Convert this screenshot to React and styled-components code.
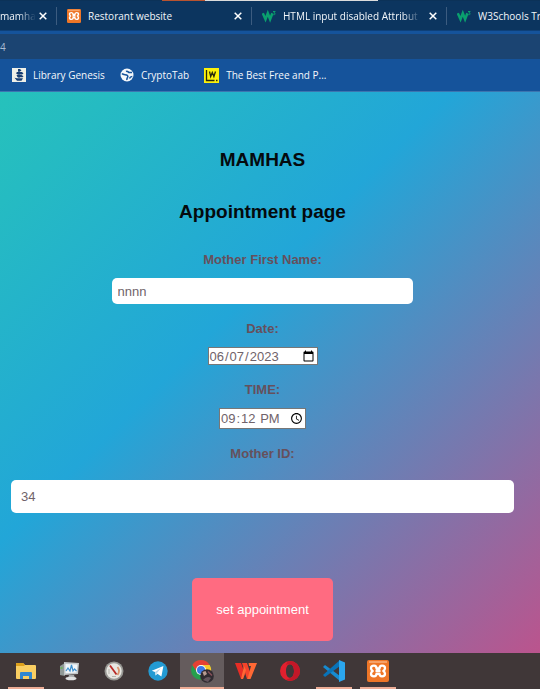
import React from "react";
import styled, { createGlobalStyle } from "styled-components";

const Global = createGlobalStyle`
  * { box-sizing: border-box; }
  html, body, #root { height: 100%; margin: 0; }
  body { font-family: "Liberation Sans", Arial, sans-serif; }
`;

const Screen = styled.div`
  min-height: 100%;
  display: flex;
  flex-direction: column;
  overflow: hidden;
`;

const WindowEdge = styled.div`
  height: 1px;
  background: linear-gradient(90deg, #0c3258 30%, #b9532f 30%, #b9532f 38%, #dcdcdc 38%, #dcdcdc 70%, #0c3258 70%);
`;

const TabStrip = styled.nav`
  height: 30px;
  display: flex;
  align-items: center;
  overflow: hidden;
  background: #0c355f;
  border-bottom: 1px solid #0e4078;
  color: #f2f6fa;
  font: 10px/16px "Open Sans", "Noto Sans", sans-serif;
`;

const Tab = styled.div`
  flex: none;
  width: ${(p) => p.$width}px;
  height: 18px;
  display: flex;
  align-items: center;
  gap: ${(p) => (p.$cut ? 2 : 7)}px;
  padding: 0 8px 0 ${(p) => (p.$cut ? 0 : 10)}px;
  border-right: 1px solid #3c5c80;
`;

const TabTitle = styled.span`
  flex: 1;
  min-width: 0;
  overflow: hidden;
  white-space: nowrap;
  mask-image: ${(p) => (p.$fade ? "linear-gradient(90deg, #000 calc(100% - 18px), transparent)" : "none")};
`;

const CloseButton = styled.button`
  flex: none;
  width: 10px;
  height: 16px;
  padding: 0;
  border: 0;
  background: none;
  color: #fff;
  display: grid;
  place-items: center;
`;

const AddressRow = styled.div`
  height: 28px;
  padding: 3px 0 0;
  background: #15539b;
`;

const Address = styled.input`
  display: block;
  width: 100%;
  height: 25px;
  padding: 0;
  border: 0;
  outline: 0;
  background: #1b4472;
  color: #a9bdd2;
  font: 10px "Open Sans", "Noto Sans", sans-serif;
`;

const Bookmarks = styled.nav`
  height: 33px;
  display: flex;
  align-items: center;
  gap: 15px;
  padding: 0 12px;
  background: #15539b;
  border-bottom: 1px solid #3c75b0;
`;

const Bookmark = styled.a`
  display: flex;
  align-items: center;
  gap: 7px;
  color: #f5f8fc;
  white-space: nowrap;
  text-decoration: none;
  font: 10px/16px "Open Sans", "Noto Sans", sans-serif;
`;

const Page = styled.main`
  flex: 1;
  padding: 0 26px 12px 11px;
  background: linear-gradient(135deg, #26c2bb 0%, #22a6d8 41%, #bb548d 100%);
`;

const Form = styled.form`
  display: flex;
  flex-direction: column;
  align-items: center;
`;

const Title = styled.h1`
  margin: ${(p) => p.$top}px 0 0;
  color: #050a0d;
  font-size: 19px;
  line-height: 24px;
  font-weight: bold;
`;

const Label = styled.label`
  margin-top: ${(p) => p.$top}px;
  color: #66505c;
  font-size: 13px;
  line-height: 16px;
  font-weight: bold;
`;

const TextField = styled.input`
  width: ${(p) => (p.$wide ? "100%" : "60%")};
  height: ${(p) => (p.$wide ? 33 : 26)}px;
  margin-top: ${(p) => (p.$wide ? 18 : 10)}px;
  padding: 0 ${(p) => (p.$wide ? 10 : 6)}px;
  border: 0;
  border-radius: 5px;
  background: #fff;
  color: #70636a;
  font: 13px "Liberation Sans", Arial, sans-serif;
`;

const PickerField = styled.input`
  width: ${(p) => p.$width}px;
  height: ${(p) => p.$height}px;
  margin-top: 10px;
  padding: 0;
  border: 1px solid #777;
  background: #fff;
  color: #70636a;
  font: 13px "Liberation Sans", Arial, sans-serif;

  &::-webkit-datetime-edit {
    padding: 0;
  }

  &::-webkit-calendar-picker-indicator {
    width: 13px;
    height: 13px;
    margin: 0 2px 0 4px;
    padding: 0;
  }
`;

const SubmitButton = styled.button`
  margin-top: 65px;
  padding: 24px;
  border: 0;
  border-radius: 5px;
  background: #ff6b81;
  color: #fff;
  font: 13px/15px "Liberation Sans", Arial, sans-serif;
`;

const Taskbar = styled.footer`
  height: 36px;
  display: flex;
  padding-left: 4px;
  background: #403738;
`;

const TaskButton = styled.button`
  flex: none;
  width: 44px;
  height: 36px;
  padding: 0;
  border: 0;
  display: grid;
  place-items: center;
  background-color: ${(p) => (p.$active ? "#655c5d" : "transparent")};
  background-image: ${(p) => (p.$open ? "linear-gradient(#edac95, #edac95)" : "none")};
  background-repeat: no-repeat;
  background-position: center bottom;
  background-size: ${(p) => (p.$active ? "100%" : "36px")} 2px;
`;

const Close = () => (
  <svg width="8" height="8" viewBox="0 0 8 8" aria-hidden="true">
    <path d="M.7.7l6.6 6.6M7.3.7L.7 7.3" stroke="#fff" strokeWidth="1.5" />
  </svg>
);

const Xampp = ({ size }) => (
  <svg width={size} height={size} viewBox="0 0 22 22" aria-hidden="true">
    <rect width="22" height="22" rx="2" fill="#ee7627" />
    <path d="M2 2h18" stroke="#f9b17e" strokeWidth="1.5" />
    <path d="M9.500 8.500C9.500 6.500 8.500 5.700 7 5.700c-2 0-3 1-3 2.600 0 1.200.7 2 1.700 2.700C4.700 11.700 4 12.500 4 13.700c0 1.600 1 2.600 3 2.600 1.500 0 2.500-.8 2.500-2.500h3c0 1.700 1 2.500 2.500 2.500 2 0 3-1 3-2.600 0-1.200-.7-2-1.700-2.700 1-.7 1.700-1.500 1.700-2.700 0-1.600-1-2.600-3-2.600-1.500 0-2.500.8-2.500 2.800zM8.500 11h5" fill="none" stroke="#fff" strokeWidth="2.300" strokeLinejoin="round" />
  </svg>
);

const W3 = () => (
  <svg width="14" height="14" viewBox="0 0 14 14" aria-hidden="true">
    <path d="M.8 4.200l2.700 6 2.300-6 2.300 6 2.300-6" fill="none" stroke="#0aa06e" strokeWidth="2.500" />
    <path d="M11 2.500h2.200l-1.300 1.400c1.700 0 1.700 2.200-.6 1.900" fill="none" stroke="#0aa06e" strokeWidth="1" />
  </svg>
);

const Genesis = () => (
  <svg width="14" height="14" viewBox="0 0 14 14" aria-hidden="true">
    <rect width="14" height="14" fill="#eef0e8" />
    <path d="M6 1h2l1.500 1.500L8 3.500H6zM5 4h5l1.500 1.500L10 6.500H5.500L4 5.300zM4.500 7h5l2 1.200-1 1H5.500zM2.500 9.800l2.500.4h6l-1.500 2.600H5z" fill="#173e73" />
    <path d="M7 1v9" stroke="#173e73" />
  </svg>
);

const Globe = () => (
  <svg width="14" height="14" viewBox="0 0 14 14" aria-hidden="true">
    <circle cx="7" cy="7" r="6.500" fill="#f5f8fb" />
    <path d="M2 5.500C3.500 7.500 6 6 7.500 7.500S6 10 7 12M12 4.500H9.500C8 4.500 8 2.500 6 3.500M9.500 10.500c.5-1.500 1.500-2 2.800-2" fill="none" stroke="#15539b" strokeWidth="1.600" />
  </svg>
);

const Lw = () => (
  <svg width="15" height="15" viewBox="0 0 15 15" aria-hidden="true">
    <rect width="15" height="15" fill="#fbf10b" />
    <path d="M2.500 2v10.500h8M5.500 3.500l1.200 5 1.600-4 1.600 4 1.600-5M12 12.500h1.500" fill="none" stroke="#29290c" strokeWidth="1.300" />
  </svg>
);

const Explorer = () => (
  <svg width="20" height="18" viewBox="0 0 20 18" aria-hidden="true">
    <path d="M0 2q0-1 1-1h6l2 2h10q1 0 1 1v12q0 1-1 1H1q-1 0-1-1z" fill="#f9ce62" />
    <path d="M0 2q0-1 1-1h6l2 2-1 1H0z" fill="#dda01b" />
    <path d="M4 17v-6q0-1 1-1h10q1 0 1 1v6h-3v-3H7v3z" fill="#2f86d0" />
  </svg>
);

const Monitor = () => (
  <svg width="22" height="20" viewBox="0 0 22 20" aria-hidden="true">
    <path d="M1 5l5-3v13l-5-1z" fill="#909a98" />
    <path d="M1.500 7h2" stroke="#60b94b" strokeWidth="1.500" />
    <path d="M5 1l15 1-1 11-14 1z" fill="#c3c8ca" />
    <path d="M6.500 3l12 .5-1 8-11 .8z" fill="#f0f6fa" />
    <path d="M7 10l2-3 2 3 1.500-6L14 10l1.500-2 2 2" fill="none" stroke="#3d90cf" strokeWidth="1.200" />
    <path d="M10 14h5l1 3H9z" fill="#a6aaab" />
    <ellipse cx="12" cy="17.500" rx="5.500" ry="1.800" fill="#dfe1e2" />
  </svg>
);

const Gauge = () => (
  <svg width="20" height="20" viewBox="0 0 20 20" aria-hidden="true">
    <circle cx="10" cy="10" r="9.500" fill="#989894" />
    <circle cx="10" cy="10" r="7.700" fill="#e8e7e2" />
    <path d="M13.500 6q3 4 0 8" fill="none" stroke="#d9966f" strokeWidth="1.800" />
    <path d="M6 4.500l6.500 9" stroke="#b92925" strokeWidth="1.800" />
    <path d="M5 8v5M8 15.500h4" stroke="#b5b4ad" />
  </svg>
);

const Telegram = () => (
  <svg width="20" height="20" viewBox="0 0 20 20" aria-hidden="true">
    <circle cx="10" cy="10" r="9.700" fill="#239bd3" />
    <path d="M3.800 9.700L15.400 5l-2 10.500-4-2.800-1.800 1.900-.6-3.600z" fill="#fff" />
    <path d="M7 11l6-4-4 5-1.400 2.600z" fill="#b8d7e8" />
  </svg>
);

const Chrome = () => (
  <svg width="24" height="24" viewBox="0 0 24 24" aria-hidden="true">
    <circle cx="11" cy="11" r="10" fill="#259f4d" />
    <path d="M2.300 6A10 10 0 0 1 19.700 6H11L7 13z" fill="#e64034" />
    <path d="M11 6h8.700A10 10 0 0 1 11 21l4.300-7.500z" fill="#f6c82b" />
    <circle cx="11" cy="11" r="5" fill="#fff" />
    <circle cx="11" cy="11" r="4" fill="#3c79e8" />
    <circle cx="17" cy="17" r="6.800" fill="#302b31" />
    <path d="M12.500 13l3-1 1.500 3-3 2z" fill="#b89b91" />
    <path d="M13 21q4-5 8-2l-3 4z" fill="#63545c" />
    <path d="M18 12.500l4 4" stroke="#87505a" strokeWidth="1.500" />
  </svg>
);

const Wps = () => (
  <svg width="22" height="18" viewBox="0 0 22 18" aria-hidden="true">
    <path d="M0 1h6l4 11-2 5H6z" fill="#e82d25" />
    <path d="M7 1h5l4 12-2.500 4H12z" fill="#f5432a" />
    <path d="M13.500 1H22l-6.500 16h-3l3.500-13h-2z" fill="#ff6834" />
    <path d="M8 17l3-9-2-4-3 13z" fill="#ff6834" />
  </svg>
);

const Opera = () => (
  <svg width="20" height="20" viewBox="0 0 20 20" aria-hidden="true">
    <path d="M10 0a10 10 0 1 0 0 20 10 10 0 0 0 0-20zm0 3.200c2.500 0 4 3 4 6.800s-1.500 6.800-4 6.800S6 14 6 10s1.500-6.800 4-6.800z" fill="#e2202e" fillRule="evenodd" />
    <path d="M10 0a10 10 0 0 1 0 20c-2 0-3-1-4-2 1 .5 2 .8 4-1.200 2.500 0 4-3 4-6.800s-1.500-6.800-4-6.800C8 3.200 7 3 6 4c1-3 2-4 4-4z" fill="#c41828" />
  </svg>
);

const VsCode = () => (
  <svg width="22" height="22" viewBox="0 0 22 22" aria-hidden="true">
    <path d="M0 7l2-2 15 11v5z" fill="#168bd1" />
    <path d="M0 15l2 2L17 6V0z" fill="#0873b9" />
    <path d="M16 0l6 2.500v17L16 22z" fill="#2ba6ee" />
  </svg>
);

const tasks = [
  { name: "File Explorer", Icon: Explorer, open: true },
  { name: "System monitor", Icon: Monitor },
  { name: "Gauge", Icon: Gauge },
  { name: "Telegram", Icon: Telegram },
  { name: "Chrome", Icon: Chrome, open: true, active: true },
  { name: "WPS Office", Icon: Wps },
  { name: "Opera", Icon: Opera },
  { name: "Visual Studio Code", Icon: VsCode, open: true },
  { name: "XAMPP", Icon: () => <Xampp size={22} />, open: true },
];

export default function App() {
  return (
    <Screen>
      <Global />
      <WindowEdge />
      <TabStrip aria-label="Tabs">
        <Tab $width={57} $cut>
          <TabTitle $fade>mamha</TabTitle>
          <CloseButton aria-label="Close tab"><Close /></CloseButton>
        </Tab>
        <Tab $width={195}>
          <Xampp size={14} />
          <TabTitle>Restorant website</TabTitle>
          <CloseButton aria-label="Close tab"><Close /></CloseButton>
        </Tab>
        <Tab $width={195}>
          <W3 />
          <TabTitle $fade>HTML input disabled Attribut</TabTitle>
          <CloseButton aria-label="Close tab"><Close /></CloseButton>
        </Tab>
        <Tab $width={195}>
          <W3 />
          <TabTitle>W3Schools Tr</TabTitle>
        </Tab>
      </TabStrip>
      <AddressRow>
        <Address aria-label="Address" defaultValue="4" />
      </AddressRow>
      <Bookmarks aria-label="Bookmarks">
        <Bookmark href="#genesis"><Genesis />Library Genesis</Bookmark>
        <Bookmark href="#cryptotab"><Globe />CryptoTab</Bookmark>
        <Bookmark href="#best"><Lw />The Best Free and P...</Bookmark>
      </Bookmarks>
      <Page>
        <Form onSubmit={(e) => e.preventDefault()}>
          <Title $top={56}>MAMHAS</Title>
          <Title as="h2" $top={28}>Appointment page</Title>
          <Label htmlFor="name" $top={28}>Mother First Name:</Label>
          <TextField id="name" defaultValue="nnnn" />
          <Label htmlFor="date" $top={17}>Date:</Label>
          <PickerField id="date" type="date" defaultValue="2023-06-07" $width={110} $height={18} />
          <Label htmlFor="time" $top={17}>TIME:</Label>
          <PickerField id="time" type="time" defaultValue="21:12" $width={87} $height={21} />
          <Label htmlFor="motherId" $top={17}>Mother ID:</Label>
          <TextField id="motherId" defaultValue="34" $wide />
          <SubmitButton type="submit">set appointment</SubmitButton>
        </Form>
      </Page>
      <Taskbar>
        {tasks.map(({ name, Icon, open, active }) => (
          <TaskButton key={name} aria-label={name} $open={open} $active={active}>
            <Icon />
          </TaskButton>
        ))}
      </Taskbar>
    </Screen>
  );
}
